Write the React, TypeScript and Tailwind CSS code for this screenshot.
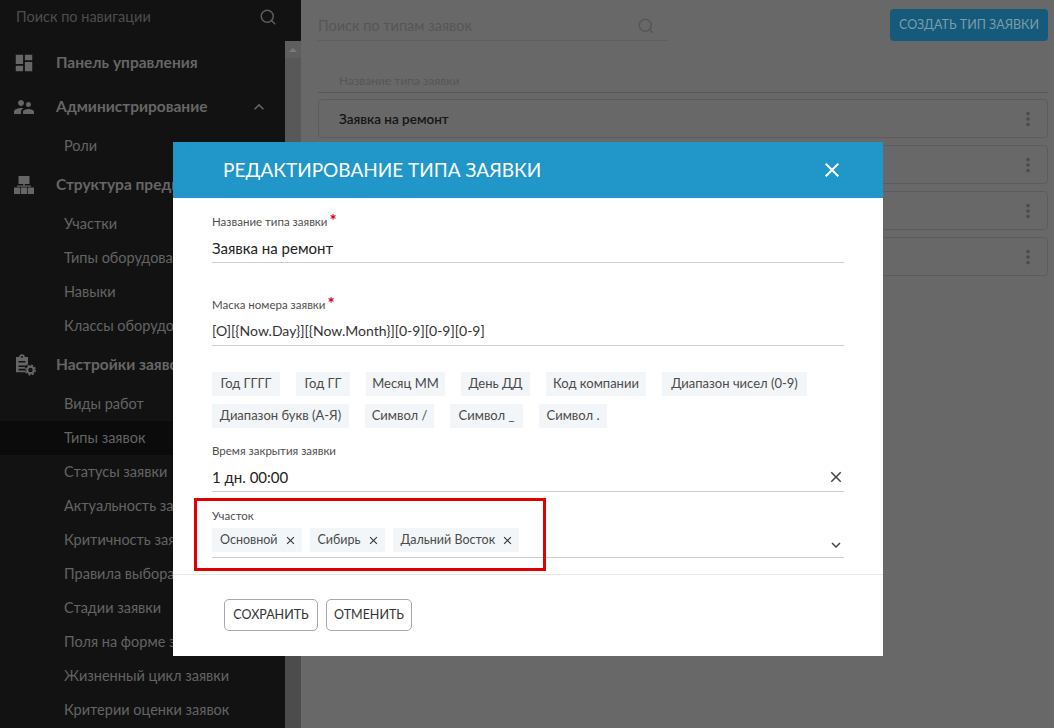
import { MdDashboard, MdSupervisorAccount, MdMoreVert, MdClose, MdKeyboardArrowUp, MdKeyboardArrowDown } from 'react-icons/md';
import { Search } from 'lucide-react';

function ClipboardGearIcon() {
  return (
    <svg width="22" height="22" viewBox="0 0 22 22" fill="currentColor">
      <path d="M2 3h3.2a2.8 2.8 0 0 1 5.6 0H14v7.2a6 6 0 0 0-1.8 1.3H4.5v1.6h6.6a6 6 0 0 0-.3 1.6H4.500v-1.600H4.500v3.400h6.800c.2.600.5 1.200.9 1.800H2z M4.500 7v1.600h7V7z M4.500 9.300" fillRule="evenodd" />
      <circle cx="8" cy="3" r="1" fill="#121212" />
      <circle cx="16.500" cy="16" r="3.300" fill="none" stroke="currentColor" strokeWidth="2.200" />
      <circle cx="16.500" cy="16" r="4.800" fill="none" stroke="currentColor" strokeWidth="1.400" strokeDasharray="2 1.770" />
    </svg>
  );
}

function HierarchyIcon() {
  return (
    <svg width="20" height="18" viewBox="0 0 20 18" fill="currentColor">
      <rect x="4.500" y="0" width="11" height="8" />
      <rect x="9.300" y="8" width="1.400" height="2" />
      <rect x="3" y="9.500" width="14" height="1.200" />
      <rect x="0" y="11.500" width="6.200" height="6.500" />
      <rect x="6.900" y="11.500" width="6.200" height="6.500" />
      <rect x="13.800" y="11.500" width="6.200" height="6.500" />
    </svg>
  );
}

const GROUP = 'flex h-[44px] items-center pl-[14px] pb-[1px] text-[15.5px] font-bold text-[#666666] whitespace-nowrap';
const SUB = 'flex h-[34px] items-center pl-[64px] text-[14.5px] text-[#646464] whitespace-nowrap';

const MASK_CHIPS = [
  { text: 'Год ГГГГ', width: 'w-[68px]' },
  { text: 'Год ГГ', width: 'w-[54px]' },
  { text: 'Месяц ММ', width: 'w-[79px]' },
  { text: 'День ДД', width: 'w-[69px]' },
  { text: 'Код компании', width: 'w-[100px]' },
  { text: 'Диапазон чисел (0-9)', width: 'w-[145px]' },
  { text: 'Диапазон букв (А-Я)', width: 'w-[137px]' },
  { text: 'Символ /', width: 'w-[69px]' },
  { text: 'Символ _', width: 'w-[73px]' },
  { text: 'Символ .', width: 'w-[68px]' },
];

function Group({ icon, label, open }: { icon: React.ReactNode; label: string; open?: boolean }) {
  return (
    <div className={GROUP}>
      <span className="flex w-[42px] shrink-0 items-center">{icon}</span>
      <span>{label}</span>
      {open && <MdKeyboardArrowUp className="ml-auto mr-[16px] text-[20px]" />}
    </div>
  );
}

function Sub({ label, active }: { label: string; active?: boolean }) {
  return <div className={active ? `${SUB} bg-[#0b0b0b]` : SUB}>{label}</div>;
}

function Sidebar() {
  return (
    <div className="flex h-full w-[301px] shrink-0 flex-col bg-[#121212]">
      <div className="flex h-[41px] shrink-0 items-center justify-between pl-[16px] pr-[24px] pb-[7px]">
        <span className="text-[14.500px] text-[#4d4d4d]">Поиск по навигации</span>
        <Search size={18} className="text-[#5c5c5c]" />
      </div>
      <div className="flex min-h-0 flex-1">
        <div className="w-[285px] shrink-0 overflow-hidden">
          <Group icon={<MdDashboard size={22} className="-ml-[1px]" />} label="Панель управления" />
          <Group icon={<MdSupervisorAccount size={24} className="-ml-[2px]" />} label="Администрирование" open />
          <Sub label="Роли" />
          <Group icon={<HierarchyIcon />} label="Структура предприятия" />
          <Sub label="Участки" />
          <Sub label="Типы оборудования" />
          <Sub label="Навыки" />
          <Sub label="Классы оборудования" />
          <Group icon={<ClipboardGearIcon />} label="Настройки заявок" />
          <Sub label="Виды работ" />
          <Sub label="Типы заявок" active />
          <Sub label="Статусы заявки" />
          <Sub label="Актуальность заявки" />
          <Sub label="Критичность заявки" />
          <Sub label="Правила выбора" />
          <Sub label="Стадии заявки" />
          <Sub label="Поля на форме заявки" />
          <Sub label="Жизненный цикл заявки" />
          <Sub label="Критерии оценки заявок" />
        </div>
        <div className="flex w-[16px] flex-col bg-[#4c4c4c]">
          <div className="flex h-[17px] items-center justify-center bg-[#5e5e5e]">
            <div className="h-0 w-0 border-x-[4px] border-b-[4px] border-x-transparent border-b-[#7a7a7a]" />
          </div>
          <div className="h-[420px] bg-[#585858]" />
        </div>
      </div>
    </div>
  );
}

function Main() {
  return (
    <div className="min-w-0 flex-1 bg-[#686868] pl-[17px] pr-[6px] pt-[9px]">
      <div className="flex items-start justify-between">
        <div className="flex h-[32px] w-[350px] items-center justify-between border-b border-[#5e5e5e] pr-[13px] pt-[3px]">
          <span className="text-[14.500px] text-[#565656]">Поиск по типам заявок</span>
          <Search size={18} className="text-[#565656]" />
        </div>
        <div className="flex h-[32px] w-[158px] items-center justify-center rounded-[4px] bg-[#155a7a] text-[12.500px] text-[#7c9cac]">
          СОЗДАТЬ ТИП ЗАЯВКИ
        </div>
      </div>
      <div className="mt-[32px] flex h-[20px] items-center border-b border-[#565656] pb-[4px] pl-[21px] text-[12px] text-[#565656]">
        Название типа заявки
      </div>
      <div className="mt-[6px] flex flex-col gap-[7px]">
        {['Заявка на ремонт', '', '', ''].map((name, i) => (
          <div key={i} className="flex h-[39px] items-center justify-between rounded-[4px] border border-[#5c5c5c] pl-[20px] pr-[8px] pt-[2px] text-[13.500px] font-semibold text-[#141414]">
            <span>{name}</span>
            <MdMoreVert size={22} className="-mt-[2px] text-[#4c4c4c]" />
          </div>
        ))}
      </div>
    </div>
  );
}

function Label({ text, required }: { text: string; required?: boolean }) {
  return (
    <div className="flex h-[14px] items-center text-[11.500px] text-[#4f4f4f]">
      {text}
      {required && <span className="-mt-[4px] ml-[2px] text-[17px] font-bold leading-none text-[#d0021b]">*</span>}
    </div>
  );
}

function Tag({ text }: { text: string }) {
  return (
    <div className="flex h-[24px] items-center gap-[6px] whitespace-nowrap bg-[#f3f6f8] pl-[8px] pr-[5px] text-[12.500px] text-[#4a4a4a]">
      {text}
      <MdClose size={13} className="text-[#333333]" />
    </div>
  );
}

function Modal() {
  return (
    <div className="absolute left-[173px] top-[142px] w-[710px] bg-white">
      <div className="flex h-[56px] items-center justify-between bg-[#2196c9] pl-[50px] pr-[39px] text-white">
        <span className="text-[19px] uppercase">Редактирование типа заявки</span>
        <MdClose size={24} />
      </div>
      <div className="px-[39px] pt-[17px]">
        <Label text="Название типа заявки" required />
        <div className="flex h-[34px] items-center border-b border-[#cccccc] pt-[5px] text-[15px] text-[#222222]">Заявка на ремонт</div>
        <div className="mt-[35px]">
          <Label text="Маска номера заявки" required />
        </div>
        <div className="flex h-[34px] items-center border-b border-[#cccccc] pt-[4px] text-[14px] text-[#333333]">{'[O][{Now.Day}][{Now.Month}][0-9][0-9][0-9]'}</div>
        <div className="mt-[26px] flex flex-wrap gap-x-[16px] gap-y-[8px]">
          {MASK_CHIPS.map((chip) => (
            <div key={chip.text} className={`flex h-[24px] items-center justify-center whitespace-nowrap bg-[#f3f6f8] text-[13px] text-[#4a4a4a] ${chip.width}`}>
              {chip.text}
            </div>
          ))}
        </div>
        <div className="mt-[16px]">
          <Label text="Время закрытия заявки" />
        </div>
        <div className="flex h-[34px] items-center justify-between border-b border-[#cccccc] pt-[5px] text-[15px] text-[#222222]">
          <span>1 дн. 00:00</span>
          <MdClose size={18} className="-mr-[1px] text-[#444444]" />
        </div>
        <div className="mt-[17px]">
          <Label text="Участок" />
        </div>
        <div className="mt-[5px] flex h-[30px] justify-between border-b border-[#cccccc]">
          <div className="flex gap-[8px]">
            <Tag text="Основной" />
            <Tag text="Сибирь" />
            <Tag text="Дальний Восток" />
          </div>
          <MdKeyboardArrowDown size={18} className="-mr-[1px] mt-[8px] text-[#444444]" />
        </div>
      </div>
      <div className="mt-[16px] flex gap-[8px] border-t border-[#e6e6e6] pb-[25px] pl-[51px] pt-[24px]">
        <div className="flex h-[32px] w-[94px] items-center justify-center rounded-[5px] border border-[#a8a8a8] text-[12.500px] text-[#333333]">СОХРАНИТЬ</div>
        <div className="flex h-[32px] w-[86px] items-center justify-center rounded-[5px] border border-[#a8a8a8] text-[12.500px] text-[#333333]">ОТМЕНИТЬ</div>
      </div>
      <div className="absolute left-[21px] top-[356px] h-[73px] w-[352px] border-[3px] border-[#e00000]" />
    </div>
  );
}

export default function App() {
  return (
    <div className="relative flex h-[728px] w-[1054px] overflow-hidden font-['Lato','Roboto',sans-serif]">
      <Sidebar />
      <Main />
      <Modal />
    </div>
  );
}
